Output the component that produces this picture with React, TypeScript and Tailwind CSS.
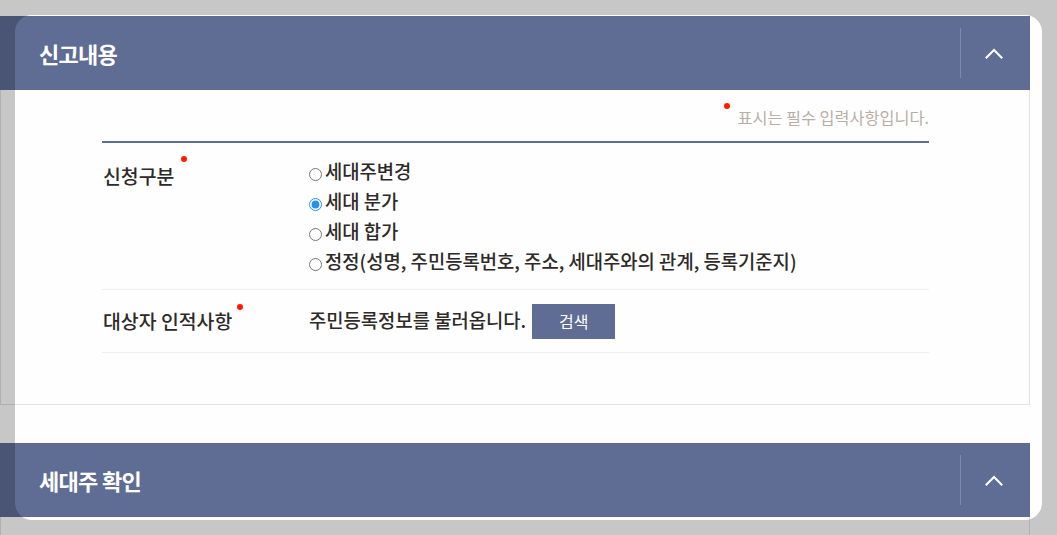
import React from "react";

function Dot({ className }: { className: string }) {
  return <span className={"absolute w-[6px] h-[6px] rounded-full bg-[#ff1a00] " + className} />;
}

function Chevron() {
  return (
    <svg width="18" height="11" viewBox="0 0 18 11" fill="none">
      <polyline points="1.5,9.5 9,2 16.5,9.5" stroke="#ffffff" strokeWidth="2" strokeLinecap="square" />
    </svg>
  );
}

function PanelHeader({ title }: { title: string }) {
  return (
    <div className="h-[74px] bg-[#5f6c94] flex items-center">
      <h2 className="flex-1 pl-[39px] text-white text-[22px] font-bold leading-none tracking-[-0.7px]">{title}</h2>
      <div className="w-px h-[50px] bg-[#7f89aa]" />
      <button className="w-[69px] h-full flex items-center justify-center pr-[4px]">
        <Chevron />
      </button>
    </div>
  );
}

const options = [
  "세대주변경",
  "세대 분가",
  "세대 합가",
  "정정(성명, 주민등록번호, 주소, 세대주와의 관계, 등록기준지)",
];

export default function App() {
  return (
    <div className="relative w-[1057px] h-[535px] overflow-hidden bg-[#fefefe] text-[#2e2a28] font-['Noto_Sans_CJK_KR','Noto_Sans',sans-serif]">
      <div className="pt-[16px]">
        <section className="w-[1030px]">
          <PanelHeader title="신고내용" />
          <div className="h-[315px] border-x border-b border-[#e2e2e2] pt-[16px]">
            <div className="w-[827px] ml-[101px]">
              <p className="flex justify-end text-[16.3px] leading-[22px] text-[#b9aea6]">
                <span className="relative pl-[13px]">
                  <Dot className="left-0 top-[-3px]" />
                  표시는 필수 입력사항입니다.
                </span>
              </p>
              <div className="mt-[13px] border-t-2 border-[#5f6c94]">
                <div className="flex border-b border-[#eeeeee] pt-[13px] pb-[13px]">
                  <div className="w-[207px] pt-[5px] pl-[1px]">
                    <span className="relative inline-block text-[19.4px] leading-[30px] font-medium">
                      신청구분
                      <Dot className="-right-[13px] top-[-5px]" />
                    </span>
                  </div>
                  <div className="flex flex-col">
                    {options.map((o, i) => (
                      <label key={o} className="flex items-center h-[30px] text-[18.8px] leading-[30px] font-medium">
                        <input
                          type="radio"
                          name="kind"
                          defaultChecked={i === 1}
                          className="m-0 mt-[7px] mr-[3px] w-[13px] h-[13px] accent-[#2590f0]"
                        />
                        <span>{o}</span>
                      </label>
                    ))}
                  </div>
                </div>
                <div className="flex items-center h-[63px] border-b border-[#eeeeee]">
                  <div className="w-[207px] pl-[1px]">
                    <span className="relative inline-block text-[19.4px] leading-[30px] font-medium">
                      대상자 인적사항
                      <Dot className="-right-[11px] top-[-2px]" />
                    </span>
                  </div>
                  <span className="text-[18.8px] leading-[30px] -mt-[3px] font-medium">주민등록정보를 불러옵니다.</span>
                  <button className="ml-[6px] w-[83px] h-[35px] bg-[#5f6c94] text-white text-[16px] leading-none">
                    검색
                  </button>
                </div>
              </div>
            </div>
          </div>
        </section>
        <section className="w-[1030px] mt-[38px]">
          <PanelHeader title="세대주 확인" />
          <div className="h-[60px] border-x border-[#e2e2e2]" />
        </section>
      </div>
      <div className="pointer-events-none absolute left-[15px] top-[15px] w-[1027px] h-[505px] rounded-[17px] shadow-[0_0_0_2000px_rgba(0,0,0,0.215)]" />
    </div>
  );
}
